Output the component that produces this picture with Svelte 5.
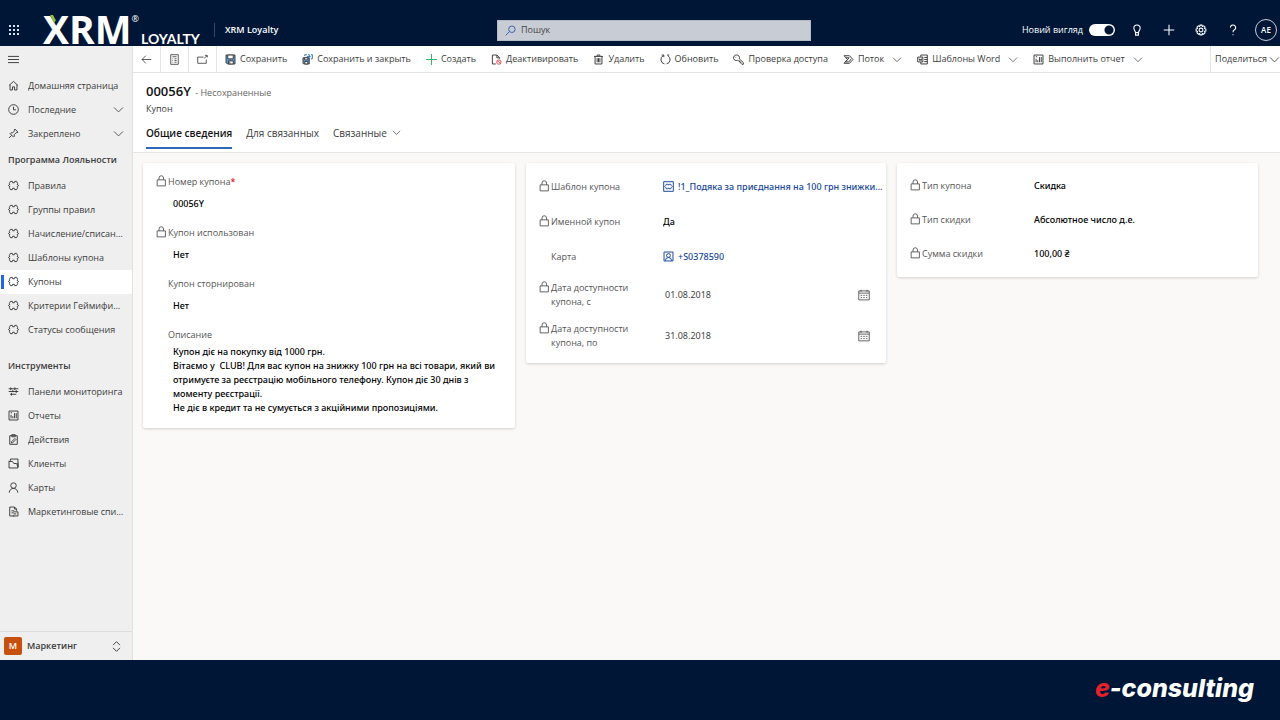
<script>
  const lineIcons = {
    home: 'M1.500 8 8 2l6.500 6M3 7v7.500h3.500V10h3v4.500H13V7',
    clock: 'M8 1a7 7 0 1 0 0 14A7 7 0 0 0 8 1M8 4v4.500h3.500',
    pin: 'M10 1.500 14.500 6l-1.500 1-1-.3-3 3 .2 2.300-1.200 1.200L3 8.200 4.200 7l2.300.2 3-3-.5-1zM5.500 10.500 1.500 14.500',
    puzzle: 'M3.500 2h2.700l.6 2h2.400l.6-2h2.700l1.500 3-.9 1.100L15.500 8l-2.400 1.900.9 1.100-1.500 3H9.800l-.6-2H6.800l-.6 2H3.500L2 11l.9-1.100L.5 8l2.400-1.900L2 5z',
    board: 'M1 4h14M1 8h14M3 12h9M4 2v4M10 2v4M12 6v4M5 10v4M7 6v3',
    report: 'M1.500 1.500h13v13h-13zM4.500 12V7M7 12V9M9.500 12V4.500M12 12V4.500M4 4h2',
    tasks: 'M2.500 2.500h11v12.500h-11zM5.500 1h5v3h-5zM5 11.500l5-5 1.500 1.500-5 5H5z',
    clients: 'M1.500 4V14.500h13V7M3.500 4V1.500h11V13M1.500 5h5l2 3h4l2 5',
    person: 'M8 1.200a4 4 0 1 0 0 8 4 4 0 0 0 0-8M1.800 15.500a6.200 6.200 0 0 1 12.400 0',
    list: 'M9 14.500H2.500v-13h7l3 3V7M9.500 1.500v3h3M5 7h4M5 10h3M8 8.500h6.500v6H7M8 11.500h4',
    back: 'M15 8H1.500M7 2.500 1.500 8 7 13.500',
    form: 'M2.500 1h11v14h-11zM5 4h6M5 7h1M8 7h3M5 9.500h1M8 9.500h3M5 12h1M8 12h3',
    popout: 'M9.500 4.500H1v9h12.500V8M10.500 6l4-3M11.500 2h3.500v3',
    trash: 'M1.500 3.500h13M6 3.500v-2h4v2M3 3.500v11h10v-11M6 6v6M8 6v6M10 6v6',
    refresh: 'M5 2.200A6.500 6.500 0 0 0 6.500 14.400M11 2.200A6.500 6.500 0 0 1 9.500 14.400M2.500 1.500H5.500v3M13.500 1.500H10.500',
    key: 'M5 1.500a4 4 0 1 0 1.500 7.600L8 10h1.500v1.700h2v1.800l1.500 1.500h2v-2.500L9.200 7A4 4 0 0 0 5 1.500M4 4.200v1',
    flow: 'M1.500 2.500h8l5 5.500-5 5.500h-8L6.500 8zM4 5.500h5L3.500 11.500h5L12 7',
    word: 'M5.500 4V1.500h9.500v13H5.500V12M1 4.500h7.500v7H1zM3 6.500l1 3 1-2 1 2 1-3M10.500 5H15M10.500 8H15M10.500 11H15',
    lock: 'M1.500 6.500h11v8h-11zM4 6.500V4a3 3 0 0 1 6 0v2.500',
    calendar: 'M1 2.500h14v12H1zM1 5.500h14M4 1v3M12 1v3M3.500 8.500h2M7 8.500h2M10.500 8.500h2M3.500 11.500h2M7 11.500h2M10.500 11.500h2',
    template: 'M1 1h14v14H1zM5 4.500h1.500l.5 1h2l.5-1H11l1 2L13.500 8 12 9.500l-1 2H9.500l-.5-1H7l-.5 1H5l-1-2L2.500 8 4 6.500z',
    contact: 'M1.500 1.500h13v13h-13zM8 3.800a2.800 2.800 0 1 0 0 5.600 2.800 2.800 0 0 0 0-5.600M3.500 14a4.500 4.500 0 0 1 9 0',
    chevron: 'M1.500 5 8 11.500 14.500 5',
    updown: 'M3 6l5-5 5 5M3 10l5 5 5-5',
    bulb: 'M6 11.500C6 9 3.800 8.500 3.800 5.500a4.200 4.200 0 0 1 8.400 0C12.200 8.500 10 9 10 11.500zM6 11.500v3.300h4v-3.300',
    plus: 'M8 1v14M1 8h14',
    gear: 'M6.700 1.500h2.600l.5 1.700 1.700-.8 1.900 1.900-.8 1.700 1.900.7v2.600l-1.900.5.8 1.900-1.900 1.900-1.700-.8-.5 1.700H6.700l-.5-1.700-1.700.8-1.900-1.900.8-1.900-1.900-.5V6.700l1.900-.7-.8-1.700 1.900-1.900 1.700.8zM8 5.500a2.500 2.500 0 1 0 0 5 2.500 2.500 0 0 0 0-5',
    help: 'M4.500 4.800A3.500 3.500 0 1 1 9.500 8C8.400 8.600 8 9.300 8 11M8 13.500v1.500',
    search: 'M10 1.500a4.700 4.700 0 1 0 0 9.400 4.700 4.700 0 0 0 0-9.400M6.500 9.500 1 15',
    menu: 'M0 3.500h16M0 8h16M0 12.500h16'
  };

  const recent = [
    { icon: 'home', text: 'Домашняя страница' },
    { icon: 'clock', text: 'Последние', more: true },
    { icon: 'pin', text: 'Закреплено', more: true }
  ];
  const groups = [
    {
      title: 'Программа Лояльности',
      items: ['Правила', 'Группы правил', 'Начисление/списание', 'Шаблоны купона', 'Купоны', 'Критерии Геймификации', 'Статусы сообщения']
        .map((text) => ({ icon: 'puzzle', text, current: text === 'Купоны' }))
    },
    {
      title: 'Инструменты',
      items: [
        { icon: 'board', text: 'Панели мониторинга' },
        { icon: 'report', text: 'Отчеты' },
        { icon: 'tasks', text: 'Действия' },
        { icon: 'clients', text: 'Клиенты' },
        { icon: 'person', text: 'Карты' },
        { icon: 'list', text: 'Маркетинговые списки' }
      ]
    }
  ];
  const commands = [
    { icon: 'save', text: 'Сохранить' },
    { icon: 'saveClose', text: 'Сохранить и закрыть' },
    { icon: 'create', text: 'Создать' },
    { icon: 'deactivate', text: 'Деактивировать' },
    { icon: 'trash', text: 'Удалить' },
    { icon: 'refresh', text: 'Обновить' },
    { icon: 'key', text: 'Проверка доступа' },
    { icon: 'flow', text: 'Поток', more: true },
    { icon: 'word', text: 'Шаблоны Word', more: true },
    { icon: 'report', text: 'Выполнить отчет', more: true }
  ];
  const general = [
    { id: 'number', label: 'Номер купона', value: '00056Y', lock: true, required: true },
    { id: 'used', label: 'Купон использован', value: 'Нет', lock: true },
    { id: 'reversed', label: 'Купон сторнирован', value: 'Нет' }
  ];
  const details = [
    { id: 'template', label: 'Шаблон купона', value: '!1_Подяка за приєднання на 100 грн знижки на все', lock: true, link: 'template' },
    { id: 'named', label: 'Именной купон', value: 'Да', lock: true },
    { id: 'card', label: 'Карта', value: '+S0378590', link: 'contact' },
    { id: 'from', label: 'Дата доступности купона, с', value: '01.08.2018', lock: true, date: true },
    { id: 'to', label: 'Дата доступности купона, по', value: '31.08.2018', lock: true, date: true }
  ];
  const discount = [
    { id: 'kind', label: 'Тип купона', value: 'Скидка' },
    { id: 'discount-kind', label: 'Тип скидки', value: 'Абсолютное число д.е.' },
    { id: 'sum', label: 'Сумма скидки', value: '100,00 ₴' }
  ];
  const description =
    'Купон діє на покупку від 1000 грн.\nВітаємо у  CLUB! Для вас купон на знижку 100 грн на всі товари, який ви отримуєте за реєстрацію мобільного телефону. Купон діє 30 днів з моменту реєстрації.\nНе діє в кредит та не сумується з акційними пропозиціями.';
</script>

{#snippet icon(name, cls = '')}
  <svg class="icon {cls}" viewBox="0 0 16 16" aria-hidden="true">
    {#if name === 'save'}
      <path d="M1.500 1.500h13v13h-11l-2-2z" fill="#5b9bd0" /><path d="M4 1.500h8V7H4z" fill="#fff" /><path d="M5 10h7v4.500H5zM7 11v3" fill="#fff" />
    {:else if name === 'saveClose'}
      <path d="M1.500 5.500h9v9h-8l-1-1z" fill="#5b9bd0" /><path d="M3.500 5.500h5v3h-5zM4 11h4.500v3.500H4z" fill="#fff" /><path d="M4 3V1h3M9 1h2M13 1h2v6h-2M7 3.500h5M10 2l2 1.500L10 5" stroke="#2b6cb0" />
    {:else if name === 'create'}
      <path d="M8 0v16M0 8h16" stroke="#2fae5f" />
    {:else if name === 'deactivate'}
      <path d="M7 14.500H2v-13h6.500l4 4V7M8.500 1.500v4h4" /><path d="M11.500 8.500a3.200 3.200 0 1 0 0 6.400 3.200 3.200 0 0 0 0-6.400M9.300 9.500l4.400 4.400" stroke="#e5484d" />
    {:else}
      <path d={lineIcons[name]} />
    {/if}
  </svg>
{/snippet}

{#snippet navItem(item)}
  <li>
    <a href="#{item.text}" class:current={item.current} aria-current={item.current ? 'page' : undefined}>
      {@render icon(item.icon)}
      <span class="clip">{item.text}</span>
      {#if item.more}{@render icon('chevron', 'soft')}{/if}
    </a>
  </li>
{/snippet}

{#snippet label(field, lock)}
  <label for={field.id}>
    <span class="lock">{#if lock}{@render icon('lock', 'soft')}{/if}</span>
    <span>{field.label}{#if field.required}<b class="required">*</b>{/if}</span>
  </label>
{/snippet}

<div class="page">
  <header class="top">
    <div class="start">
      <button class="waffle" aria-label="Приложения">
        <svg viewBox="0 0 11 11" aria-hidden="true">
          {#each [0, 4, 8] as y}{#each [0, 4, 8] as x}<rect {x} {y} width="2" height="2" />{/each}{/each}
        </svg>
      </button>
      <div class="brand">
        <span class="xrm">XRM</span><sup>®</sup><span class="loyalty">LOYALTY</span>
        <svg class="leaf" viewBox="0 0 10 14" aria-hidden="true"><path d="M0 0h5l5 9-3 5z" /></svg>
      </div>
      <a class="app" href="#app">XRM Loyalty</a>
    </div>
    <div class="search">
      {@render icon('search')}
      <input type="search" placeholder="Пошук" aria-label="Пошук" />
    </div>
    <div class="tools">
      <label class="look">Новий вигляд <input type="checkbox" role="switch" checked /></label>
      <button aria-label="Советы">{@render icon('bulb')}</button>
      <button aria-label="Добавить">{@render icon('plus')}</button>
      <button aria-label="Параметры">{@render icon('gear')}</button>
      <button aria-label="Справка">{@render icon('help')}</button>
      <button class="avatar">AE</button>
    </div>
  </header>

  <div class="shell">
    <nav class="side">
      <button class="burger" aria-label="Меню">{@render icon('menu')}</button>
      <ul>{#each recent as item}{@render navItem(item)}{/each}</ul>
      {#each groups as group}
        <section>
          <h2>{group.title}</h2>
          <ul>{#each group.items as item}{@render navItem(item)}{/each}</ul>
        </section>
      {/each}
      <button class="area"><span class="tile">М</span><span class="area-name">Маркетинг</span>{@render icon('updown')}</button>
    </nav>

    <div class="content">
      <div class="commands">
        <button class="square" aria-label="Назад">{@render icon('back', 'soft')}</button>
        <button class="square" aria-label="Форма">{@render icon('form', 'soft')}</button>
        <button class="square" aria-label="В новом окне">{@render icon('popout', 'soft')}</button>
        <div class="actions">
          {#each commands as c}
            <button>{@render icon(c.icon)}<span>{c.text}</span>{#if c.more}{@render icon('chevron', 'more')}{/if}</button>
          {/each}
        </div>
        <button class="share"><span>Поделиться</span>{@render icon('chevron', 'soft')}</button>
      </div>

      <div class="record">
        <h1>00056Y <small>- Несохраненные</small></h1>
        <p>Купон</p>
        <div class="tabs" role="tablist">
          <button role="tab" aria-selected="true">Общие сведения</button>
          <button role="tab" aria-selected="false">Для связанных</button>
          <button role="tab" aria-selected="false">Связанные {@render icon('chevron', 'soft')}</button>
        </div>
      </div>

      <main class="cards">
        <section class="card stacked">
          {#each general as f}
            <div class="field">
              {@render label(f, f.lock)}
              <input id={f.id} value={f.value} readonly />
            </div>
          {/each}
          <div class="field">
            {@render label({ id: 'description', label: 'Описание' }, false)}
            <textarea id="description" rows="5" readonly value={description}></textarea>
          </div>
        </section>

        <section class="card details">
          {#each details as f}
            <div class="row" class:date={f.date}>
              {@render label(f, f.lock)}
              {#if f.link}
                <a id={f.id} href="#{f.id}">{@render icon(f.link)}<span class="clip">{f.value}</span></a>
              {:else}
                <input id={f.id} value={f.value} readonly />
              {/if}
              {#if f.date}<button aria-label="Выбрать дату">{@render icon('calendar', 'soft')}</button>{/if}
            </div>
          {/each}
        </section>

        <section class="card discount">
          {#each discount as f}
            <div class="row">
              {@render label(f, true)}
              <input id={f.id} value={f.value} readonly />
            </div>
          {/each}
        </section>
      </main>
    </div>
  </div>

  <footer><strong><span>e</span>-consulting</strong></footer>
</div>

<style>
  :global(body) { margin: 0; }
  .page {
    min-height: 100vh;
    display: flex;
    flex-direction: column;
    font: 9px/14px "Open Sans", "Noto Sans", sans-serif;
    color: #3c3c3c;
    background: #001637;
  }
  .page *, .page { box-sizing: border-box; }
  button, input, textarea {
    font: inherit;
    color: inherit;
    background: none;
    border: 0;
    margin: 0;
    padding: 0;
    outline: 0;
  }
  button { display: flex; align-items: center; white-space: nowrap; cursor: pointer; }
  a { color: inherit; text-decoration: none; }
  ul, h1, h2, p { margin: 0; padding: 0; list-style: none; }
  .icon {
    width: 11px;
    height: 11px;
    flex: none;
    fill: none;
    stroke: currentColor;
    stroke-width: 1.4;
  }
  .soft { stroke-width: 1.2; }
  .clip { overflow: hidden; text-overflow: ellipsis; white-space: nowrap; }

  .top {
    height: 46px;
    display: grid;
    grid-template-columns: 497fr 314fr 466fr;
    align-items: center;
    padding: 14px 3px 0 0;
    color: #fff;
  }
  .start { display: grid; grid-template-columns: 43px 171px 1fr; align-items: center; }
  .waffle { padding-left: 9px; }
  .waffle svg { width: 11px; height: 11px; fill: #dde3ee; }
  .brand { position: relative; height: 32px; display: flex; align-items: flex-start; }
  .xrm { font-size: 39px; font-weight: 700; line-height: 30px; }
  .brand sup { font-size: 9px; line-height: 10px; }
  .loyalty { font: 700 14px/14px Lato, sans-serif; align-self: flex-end; margin-left: 2px; }
  .leaf { position: absolute; left: 7px; top: 1px; width: 6px; height: 8px; fill: #8bc63e; }
  .app { border-left: 1px solid #34476a; padding-left: 10px; font-weight: 600; }
  .search {
    height: 21px;
    display: flex;
    align-items: center;
    gap: 5px;
    padding-left: 7px;
    background: #c8ccd5;
    border: 1px solid #b4bac6;
    color: #3565ab;
  }
  .search input { flex: 1; min-width: 0; color: #333; }
  .search input::placeholder { color: #444; opacity: 1; }
  .tools { display: flex; align-items: center; justify-content: flex-end; gap: 20px; }
  .look { display: flex; align-items: center; gap: 6px; font-weight: 500; white-space: nowrap; margin-right: -4px; }
  .look input {
    appearance: none;
    width: 26px;
    height: 12px;
    border-radius: 6px;
    background: radial-gradient(circle at 20px 6px, #001637 4px, #fff 5px);
  }
  .tools .icon { width: 12px; height: 12px; }
  .tools .avatar {
    width: 22px;
    height: 22px;
    justify-content: center;
    border: 1px solid #c6cddb;
    border-radius: 50%;
    font-size: 8px;
    font-weight: 600;
    margin-left: -4px;
  }

  .shell { flex: 1; display: grid; grid-template-columns: 133px 1fr; }
  .side {
    display: flex;
    flex-direction: column;
    background: #efefef;
    border-right: 1px solid #e1e1e1;
    min-width: 0;
  }
  .burger { height: 28px; padding: 0 0 2px 8px; }
  .side a {
    height: 24px;
    display: flex;
    align-items: center;
    gap: 9px;
    padding: 0 8px 1px 8px;
  }
  .side a .clip { flex: 1; }
  .side .current { background: linear-gradient(#2266e3, #2266e3) 1px center / 3px 14px no-repeat #fff; }
  .side h2 { font-size: 9px; line-height: 24px; font-weight: 600; padding: 2px 8px; white-space: nowrap; }
  .side section + section { margin-top: 10px; }
  .area {
    margin-top: auto;
    height: 29px;
    border-top: 1px solid #dcdcdc;
    padding: 0 10px 0 4px;
    gap: 5px;
    font-weight: 600;
  }
  .area-name { flex: 1; text-align: left; }
  .tile { width: 18px; line-height: 18px; background: #c8500e; color: #fff; border-radius: 2px; }

  .content { background: #faf9f8; min-width: 0; }
  .commands { display: flex; height: 27px; background: #fff; border-bottom: 1px solid #e4e4e4; }
  .square { width: 28px; justify-content: center; border-right: 1px solid #e4e4e4; }
  .actions { flex: 1; display: flex; gap: 15px; padding-left: 8px; min-width: 0; }
  .actions button { gap: 4px; }
  .actions .more { margin-left: 4px; stroke-width: 1.1; width: 10px; }
  .share { border-left: 1px solid #e4e4e4; gap: 2px; padding-left: 4px; }

  .record { background: #fff; border-bottom: 1px solid #e6e6e6; padding: 9px 13px 3px; }
  h1 { font-size: 13px; line-height: 18px; font-weight: 600; color: #111; }
  h1 small { font-size: 9px; font-weight: 400; color: #666; margin-left: 1px; }
  .tabs { display: flex; gap: 14px; margin-top: 6px; }
  .tabs button { height: 27px; padding-bottom: 4px; gap: 5px; font-size: 10px; border-bottom: 2px solid transparent; }
  .tabs [aria-selected="true"] { font-weight: 600; color: #111; border-color: #2f68b8; }
  .tabs .icon { width: 9px; height: 9px; }

  .cards {
    display: grid;
    grid-template-columns: 372fr 360fr 361fr;
    align-items: start;
    gap: 11px;
    padding: 10px 22px 10px 10px;
  }
  .card {
    background: #fff;
    border-radius: 2px;
    box-shadow: 0 1px 3px #0000002b;
    min-width: 0;
  }
  .card label { display: flex; color: #555; }
  .lock { width: 12px; flex: none; }
  .lock .icon { width: 12px; height: 12px; display: block; }
  .required { color: #e81123; font-weight: 600; }
  .card input, textarea, .row a { font-family: "Noto Sans", sans-serif; font-weight: 500; }
  .card input, textarea { width: 100%; min-width: 0; color: #000; }
  .stacked { padding: 12px 13px 11px; }
  .stacked .field { min-height: 51px; }
  .stacked input { display: block; height: 14px; margin-top: 8px; padding-left: 17px; }
  textarea { display: block; height: 72px; resize: none; overflow: hidden; margin-top: 3px; padding-left: 17px; }
  .row { display: grid; grid-template-columns: 114px 1fr auto; align-items: center; }
  .row a {
    grid-column: 2 / -1;
    display: flex;
    align-items: center;
    gap: 4px;
    min-width: 0;
    color: #17479b;
  }
  .details { padding: 6px 2px 7px 13px; }
  .details .row { min-height: 35px; column-gap: 10px; }
  .details .date { min-height: 41px; }
  .details .date input { font-weight: 400; color: #444; padding-left: 2px; }
  .details .date button { padding-right: 14px; color: #555; }
  .details .date .icon { width: 12px; height: 12px; }
  .discount { padding: 6px 13px; }
  .discount .row { min-height: 34px; column-gap: 10px; }

  footer { height: 60px; display: flex; align-items: center; justify-content: flex-end; padding: 0 26px 4px; }
  footer strong { font: italic 800 25px/28px Inter, sans-serif; color: #fff; }
  footer span { color: #e3222b; }
</style>
